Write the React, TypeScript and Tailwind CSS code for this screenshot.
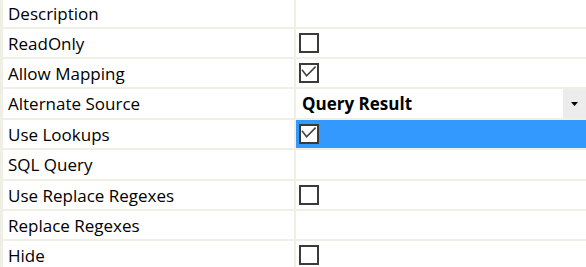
import React from "react";

type Row = {
  label: string;
  kind: "none" | "check" | "checked" | "select";
  h: string;
  selected?: boolean;
};

const rows: Row[] = [
  { label: "Description", kind: "none", h: "h-[29px]" },
  { label: "ReadOnly", kind: "check", h: "h-[30px]" },
  { label: "Allow Mapping", kind: "checked", h: "h-[30px]" },
  { label: "Alternate Source", kind: "select", h: "h-[31px]" },
  { label: "Use Lookups", kind: "checked", h: "h-[30px]", selected: true },
  { label: "SQL Query", kind: "none", h: "h-[31px]" },
  { label: "Use Replace Regexes", kind: "check", h: "h-[30px]" },
  { label: "Replace Regexes", kind: "none", h: "h-[30px]" },
  { label: "Hide", kind: "check", h: "h-[30px]" },
];

function CheckBox({ checked }: { checked: boolean }) {
  return (
    <div className="w-[20px] h-[20px] border-2 border-[#3a3a3a] bg-white flex items-center justify-center">
      {checked && (
        <svg width="16" height="16" viewBox="0 0 16 16" className="block">
          <polyline
            points="1,4.8 5.6,10.8 14.6,1.6"
            fill="none"
            stroke="#444"
            strokeWidth="1.6"
          />
        </svg>
      )}
    </div>
  );
}

export default function App() {
  return (
    <div
      className="w-[586px] h-[267px] overflow-hidden bg-white flex text-black"
      style={{ fontFamily: '"Open Sans", "Noto Sans", sans-serif' }}
    >
      <div className="w-[3px] shrink-0 bg-[#efefe6]" />
      <div className="flex-1 flex flex-col">
        {rows.map((r) => (
          <div
            key={r.label}
            className={`flex shrink-0 border-b-2 border-[#efefe6] ${r.h}`}
          >
            <div className="w-[293px] shrink-0 pl-[5px] flex items-center text-[17px] leading-none border-r-2 border-[#efefe6]">
              {r.label}
            </div>
            <div
              className={`flex-1 flex items-center ${
                r.selected ? "bg-[#3399ff]" : "bg-white"
              }`}
            >
              {(r.kind === "check" || r.kind === "checked") && (
                <div className="pl-[3px]">
                  <CheckBox checked={r.kind === "checked"} />
                </div>
              )}
              {r.kind === "select" && (
                <div className="flex-1 flex items-stretch h-full">
                  <div className="flex-1 pl-[6px] flex items-center font-bold text-[17px] leading-none">
                    Query Result
                  </div>
                  <div className="w-[23px] bg-[#ececec] flex items-center justify-center">
                    <svg width="7" height="4" viewBox="0 0 7 4" className="block">
                      <polygon points="0,0 7,0 3.5,4" fill="#000" />
                    </svg>
                  </div>
                </div>
              )}
            </div>
          </div>
        ))}
      </div>
    </div>
  );
}
